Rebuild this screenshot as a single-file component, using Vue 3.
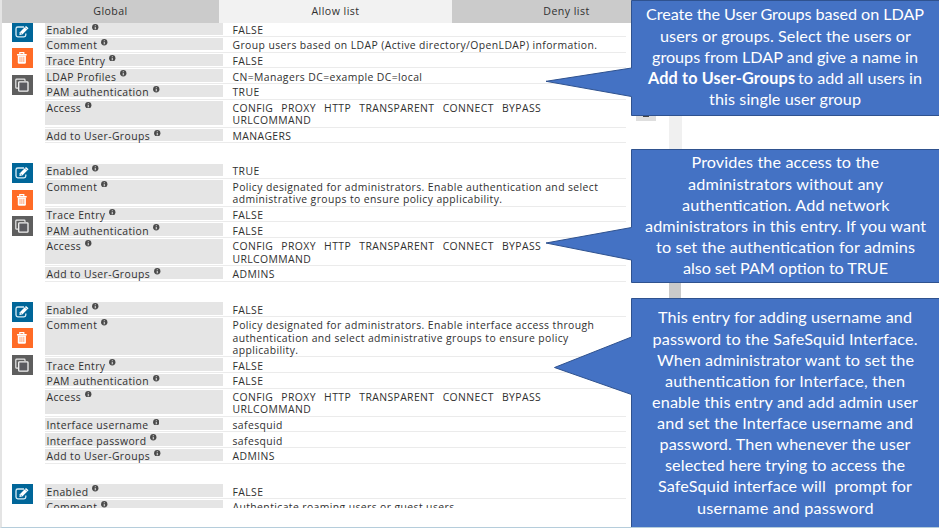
<script setup>
const access = ['CONFIG', 'PROXY', 'HTTP', 'TRANSPARENT', 'CONNECT', 'BYPASS']

const entries = [
  {
    rows: [
      { label: 'Enabled', lines: ['FALSE'] },
      { label: 'Comment', lines: ['Group users based on LDAP (Active directory/OpenLDAP) information.'] },
      { label: 'Trace Entry', lines: ['FALSE'] },
      { label: 'LDAP Profiles', lines: ['CN=Managers DC=example DC=local'] },
      { label: 'PAM authentication', lines: ['TRUE'] },
      { label: 'Access', words: access, lines: ['URLCOMMAND'] },
      { label: 'Add to User-Groups', lines: ['MANAGERS'] },
    ],
  },
  {
    rows: [
      { label: 'Enabled', lines: ['TRUE'] },
      { label: 'Comment', lines: ['Policy designated for administrators. Enable authentication and select', 'administrative groups to ensure policy applicability.'] },
      { label: 'Trace Entry', lines: ['FALSE'] },
      { label: 'PAM authentication', lines: ['FALSE'] },
      { label: 'Access', words: access, lines: ['URLCOMMAND'] },
      { label: 'Add to User-Groups', lines: ['ADMINS'] },
    ],
  },
  {
    rows: [
      { label: 'Enabled', lines: ['FALSE'] },
      { label: 'Comment', lines: ['Policy designated for administrators. Enable interface access through', 'authentication and select administrative groups to ensure policy', 'applicability.'] },
      { label: 'Trace Entry', lines: ['FALSE'] },
      { label: 'PAM authentication', lines: ['FALSE'] },
      { label: 'Access', words: access, lines: ['URLCOMMAND'] },
      { label: 'Interface username', lines: ['safesquid'] },
      { label: 'Interface password', lines: ['safesquid'] },
      { label: 'Add to User-Groups', lines: ['ADMINS'] },
    ],
  },
  {
    rows: [
      { label: 'Enabled', lines: ['FALSE'] },
      { label: 'Comment', lines: ['Authenticate roaming users or guest users.'] },
    ],
  },
]

// Callout balloons: outline plus text runs as { x, y, w, t }
const callouts = [
  {
    shape: 'M631.5 .5H941V115.5H631.5V96.5L546 81.3L631.5 68Z',
    runs: [
      { x: 646, y: 20, w: 278, t: 'Create the User Groups based on LDAP' },
      { x: 660, y: 42, w: 251, t: 'users or groups. Select the users or' },
      { x: 652, y: 63, w: 266, t: 'groups from LDAP and give a name in' },
      { x: 648, y: 84, w: 147, t: 'Add to User-Groups', bold: true },
      { x: 798, y: 84, w: 124, t: 'to add all users in' },
      { x: 709, y: 105, w: 152, t: 'this single user group' },
    ],
  },
  {
    shape: 'M631.5 149.5H941V282.5H631.5V260L546 243L631.5 227.5Z',
    runs: [
      { x: 691.5, y: 168, w: 187.5, t: 'Provides the access to the' },
      { x: 688, y: 190, w: 195, t: 'administrators without any' },
      { x: 682, y: 211, w: 207.5, t: 'authentication. Add network' },
      { x: 645, y: 232, w: 281, t: 'administrators in this entry. If you want' },
      { x: 656, y: 253, w: 259, t: 'to set the authentication for admins' },
      { x: 683, y: 274, w: 205, t: 'also set PAM option to TRUE' },
    ],
  },
  {
    shape: 'M631.5 298.5H941V530H631.5V394.5L554.5 367.5L631.5 337Z',
    runs: [
      { x: 658, y: 323, w: 254, t: 'This entry for adding username and' },
      { x: 652.5, y: 345, w: 265, t: 'password to the SafeSquid Interface.' },
      { x: 657, y: 366, w: 257, t: 'When administrator want to set the' },
      { x: 665, y: 387, w: 240, t: 'authentication for Interface, then' },
      { x: 652, y: 408, w: 266, t: 'enable this entry and add admin user' },
      { x: 657, y: 429, w: 256, t: 'and set the Interface username and' },
      { x: 659.5, y: 450, w: 251, t: 'password. Then whenever the user' },
      { x: 665, y: 471, w: 240, t: 'selected here trying to access the' },
      { x: 658, y: 492, w: 254, t: 'SafeSquid interface will\u00a0 prompt for' },
      { x: 697, y: 514, w: 176.5, t: 'username and password' },
    ],
  },
]
</script>

<template>
  <div class="screen">
    <nav class="tabs">
      <div class="tab global">Global</div>
      <div class="tab active">Allow list</div>
      <div class="tab deny">Deny list</div>
    </nav>

    <main class="list">
      <section v-for="(entry, i) in entries" :key="i" class="entry">
        <div class="actions">
          <button class="act edit">
            <svg viewBox="0 0 20 20">
              <path d="M12 5H5.8Q4 5 4 6.8V13Q4 14.8 5.8 14.8H12Q13.8 14.8 13.8 13V11.5" fill="none" stroke="#d9edf6" stroke-width="1.3" />
              <path d="M7.8 10.2L14 3.9L16.5 6.3L10.3 12.5L7.4 13.1Z" fill="#fff" />
              <path d="M8.6 11L10 12.2M13 5.3L15.1 7.4" stroke="#006699" stroke-width=".6" />
            </svg>
          </button>
          <button class="act trash">
            <svg viewBox="0 0 20 20">
              <path d="M7.8 6V4.7H11.8V6" fill="none" stroke="#fff" stroke-width="1.2" />
              <path d="M5 6H14.7V7.5H5Z" fill="#fff" />
              <path d="M5.8 7.5H13.9V14.4Q13.9 15.7 12.7 15.7H7Q5.8 15.7 5.8 14.4Z" fill="#fff" />
              <path d="M8 8.8V14M9.9 8.8V14M11.8 8.8V14" stroke="#ff9a6b" stroke-width=".9" />
            </svg>
          </button>
          <button class="act copy">
            <svg viewBox="0 0 20 20">
              <path d="M6 13.2H4.6Q3.8 13.2 3.8 12.4V4.9Q3.8 4.1 4.6 4.1H12.2Q13 4.1 13 4.9V6" fill="none" stroke="#e8e8e8" stroke-width="1.2" />
              <rect x="6.7" y="6.8" width="9.3" height="9.4" rx=".8" fill="#5b5b60" stroke="#f2f2f2" stroke-width="1.3" />
            </svg>
          </button>
        </div>
        <div class="rows">
          <div v-for="row in entry.rows" :key="row.label" class="row">
            <div class="label">
              <span>{{ row.label }}</span>
              <svg class="info" viewBox="0 0 7 7">
                <circle cx="3.5" cy="3.5" r="3.4" fill="#4a4a4a" />
                <path d="M3 1.3H4.1V2.2H3ZM2.7 2.9H4.1V5H4.5V5.6H2.6V5H3V3.5H2.7Z" fill="#d8d8d8" />
              </svg>
            </div>
            <div class="value">
              <div v-if="row.words" class="words"><span v-for="w in row.words" :key="w">{{ w }}</span></div>
              <div v-for="line in row.lines" :key="line">{{ line }}</div>
            </div>
          </div>
        </div>
      </section>
    </main>

    <div class="grip"><i></i></div>
    <div class="track"></div>
    <div class="thumb"></div>

    <svg class="callouts" viewBox="0 0 939 528">
      <g v-for="(c, i) in callouts" :key="i">
        <path :d="c.shape" class="balloon" />
        <text
          v-for="r in c.runs"
          :key="r.t"
          :x="r.x"
          :y="r.y"
          :textLength="r.w"
          :class="{ strong: r.bold }"
        >{{ r.t }}</text>
      </g>
    </svg>
  </div>
</template>

<style>
body {
  margin: 0;
  background: #fff;
}
</style>

<style scoped>
.screen {
  position: relative;
  box-sizing: border-box;
  width: 939px;
  height: 528px;
  overflow: hidden;
  border-left: 2px solid #e4e4e4;
  border-bottom: 1px solid #b5cddb;
  background: #fff;
  color: #303030;
  font-family: "Open Sans", "Noto Sans", sans-serif;
  font-size: 10.4px;
  letter-spacing: 0.4px;
}
.tabs {
  display: grid;
  grid-template-columns: 217px 233px 229px;
  height: 22.5px;
}
.tab {
  background: #cbcbcb;
  text-align: center;
  line-height: 23px;
  font-size: 10.6px;
  letter-spacing: 0.45px;
}
.tab.active {
  background: #f2f2f2;
}
.list {
  height: 485.5px;
  overflow: hidden;
}
.entry {
  display: flex;
  gap: 12px;
  padding-left: 10px;
  margin-bottom: 19.8px;
}
.entry:first-child {
  margin-top: -1px;
}
.actions {
  display: flex;
  flex-direction: column;
  gap: 6.5px;
  padding-top: 0.3px;
  height: 72px;
}
.entry:last-child .act + .act {
  visibility: hidden;
}
.act {
  display: block;
  width: 20.5px;
  height: 20px;
  padding: 0;
  border: 0;
}
.act svg {
  display: block;
  width: 20px;
  height: 20px;
}
.edit { background: #006699; }
.trash { background: #ff6b26; }
.copy { background: #5e5e5e; }
.rows {
  width: 581px;
}
.row {
  display: grid;
  grid-template-columns: 178px 1fr;
  column-gap: 10px;
  box-sizing: border-box;
  padding: 1px 0 1.3px;
  border-bottom: 1px solid #ebebeb;
  line-height: 12.35px;
  white-space: nowrap;
}
.label {
  display: flex;
  gap: 4px;
  padding-left: 2px;
  background: #e5e5e5;
}
.info {
  width: 6.5px;
  height: 6.5px;
  margin-top: 1px;
}
.label span,
.value div {
  position: relative;
  top: 1.2px;
}
.words {
  display: flex;
  gap: 8.2px;
}
.grip {
  position: absolute;
  left: 634px;
  top: 108px;
  width: 20px;
  height: 13px;
  background: #dedede;
}
.grip i {
  position: absolute;
  left: 7px;
  top: 7px;
  width: 6px;
  height: 2px;
  background: #444;
}
.track {
  position: absolute;
  left: 667px;
  top: 23px;
  width: 12.5px;
  height: 230px;
  background: #f0f0f0;
}
.thumb {
  position: absolute;
  left: 667px;
  top: 253px;
  width: 11.5px;
  height: 60px;
  background: #cacaca;
}
.callouts {
  position: absolute;
  left: -2px;
  top: 0;
  width: 939px;
  height: 528px;
}
.balloon {
  fill: #4472c4;
  stroke: #2f528f;
  stroke-width: 1;
}
text {
  fill: #fff;
  font-family: Lato, sans-serif;
  font-size: 16.2px;
  letter-spacing: 0;
}
.strong {
  font-weight: 700;
}
</style>
